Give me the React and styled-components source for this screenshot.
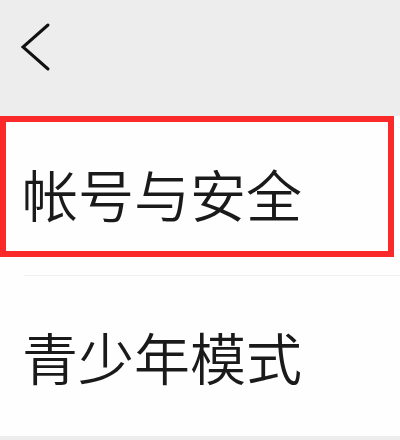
import React from "react";
import styled, { createGlobalStyle } from "styled-components";

const Global = createGlobalStyle`
  html, body { margin: 0; padding: 0; background: #fefefe; }
  body { font-family: "Noto Sans CJK SC", "Noto Sans", sans-serif; }
`;

const Page = styled.div`
  width: 400px;
  height: 440px;
  display: flex;
  flex-direction: column;
  background: #fefefe;
  overflow: hidden;
`;

const Header = styled.div`
  height: 116px;
  flex: none;
  background: #ededed;
  display: flex;
  align-items: flex-start;
  padding: 22px 0 0 18px;
  box-sizing: border-box;
`;

const BackButton = styled.button`
  border: none;
  background: transparent;
  padding: 0;
  width: 34px;
  height: 52px;
  display: flex;
  cursor: pointer;
`;

const Row = styled.div`
  position: relative;
  height: ${(p) => p.$h}px;
  flex: none;
  display: flex;
  align-items: center;
  padding: 0 0 ${(p) => p.$pb || 0}px 22px;
  box-sizing: border-box;
`;

const Label = styled.span`
  font-family: "Noto Sans CJK SC", sans-serif;
  font-size: 56px;
  font-weight: 350;
  line-height: 1;
  color: #1a1a1a;
`;

const Divider = styled.div`
  height: 1px;
  flex: none;
  margin-left: 24px;
  background: #efefef;
`;

const Highlight = styled.div`
  position: absolute;
  left: 0;
  top: 0;
  width: 394px;
  height: 141px;
  border: 6px solid #fb2a2a;
  box-sizing: border-box;
  pointer-events: none;
`;

const Footer = styled.div`
  flex: 1;
  background: #ededed;
`;

export default function App() {
  return (
    <>
      <Global />
      <Page>
        <Header>
          <BackButton aria-label="back">
            <svg width="34" height="52" viewBox="0 0 34 52">
              <path
                d="M30 3 L5 25 L30 47"
                fill="none"
                stroke="#111"
                strokeWidth="3"
                strokeLinecap="round"
                strokeLinejoin="miter"
              />
            </svg>
          </BackButton>
        </Header>
        <Row $h={159} $pb={5}>
          <Label>帐号与安全</Label>
          <Highlight />
        </Row>
        <Divider />
        <Row $h={160}>
          <Label>青少年模式</Label>
        </Row>
        <Footer />
      </Page>
    </>
  );
}
